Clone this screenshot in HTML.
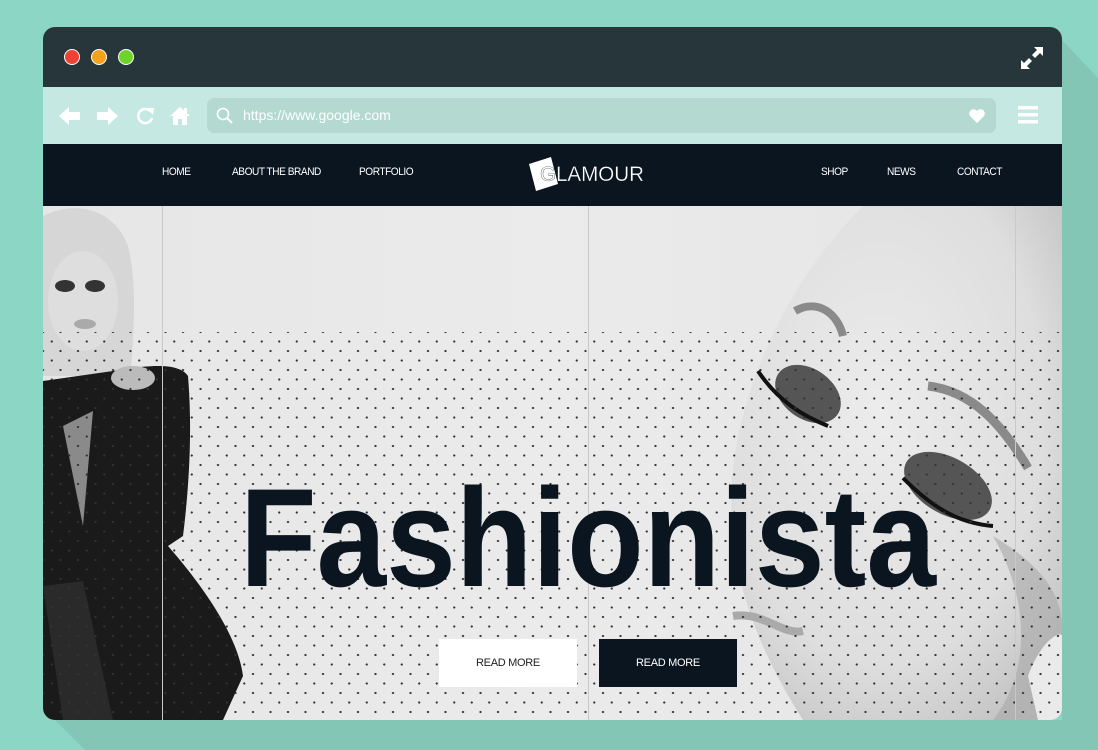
<!DOCTYPE html>
<html><head><meta charset="utf-8"><style>
*{margin:0;padding:0;box-sizing:border-box}
body{width:1098px;height:750px;overflow:hidden;background:#8cd6c5;font-family:"Liberation Sans",sans-serif;position:relative}
.shadow{position:absolute;left:0;top:0;width:1098px;height:750px}
.win{position:absolute;left:43px;top:27px;width:1019px;height:693px;border-radius:12px;overflow:hidden;background:#e8e8e8}
.title{position:absolute;left:0;top:0;width:100%;height:60px;background:#26363b}
.dot{position:absolute;top:22px;width:16px;height:16px;border-radius:50%;border:1.5px solid #fff}
.tool{position:absolute;left:0;top:60px;width:100%;height:57px;background:#c5e9e2}
.url{position:absolute;left:164px;top:11px;width:789px;height:35px;border-radius:7px;background:#b3d9d1;color:#fff;font-size:14px;line-height:35px;padding-left:36px}
.nav{position:absolute;left:0;top:117px;width:100%;height:62px;background:#0a1520;color:#fff;font-size:11px}
.nav span{position:absolute;top:22px;letter-spacing:-0.5px;transform:scaleX(0.92);transform-origin:left}
.hero{position:absolute;left:0;top:179px;width:100%;height:514px;background:linear-gradient(90deg,#e6e6e6,#ebebeb 50%,#e4e4e4)}
.dots{position:absolute;left:0;top:126px;width:100%;height:388px;
background-image:radial-gradient(circle,#333 0.9px,transparent 1.3px),radial-gradient(circle,#333 0.9px,transparent 1.3px);
background-size:17.5px 19px,17.5px 19px;background-position:0 0,8.75px 9.5px}
.vl{position:absolute;top:0;width:1px;height:514px;background:#c9c9c9}
.btn{position:absolute;top:433px;width:138px;height:48px;font-size:11px;text-align:center;line-height:48px;letter-spacing:-0.3px}
</style></head><body>
<svg class="shadow" viewBox="0 0 1098 750"><polygon points="1062,40 1098,78 1098,750 85,750 55,720 1062,720" fill="#83c6b6"/></svg>
<div class="win">
 <div class="title">
  <div class="dot" style="left:21px;background:#ef4134"></div>
  <div class="dot" style="left:48px;background:#f7a11a"></div>
  <div class="dot" style="left:75px;background:#6fd42a"></div>
  <svg style="position:absolute;left:977px;top:19px" width="24" height="24" viewBox="0 0 24 24" fill="#fff"><polygon points="14,1 23,1 23,10 20,7 15,12 12,9 17,4"/><polygon points="1,14 1,23 10,23 7,20 12,15 9,12 4,17"/></svg>
 </div>
 <div class="tool">
  <svg style="position:absolute;left:16px;top:19px" width="22" height="20" viewBox="0 0 22 20" fill="#fff"><polygon points="0,10 10,1 10,6 21,6 21,14 10,14 10,19"/></svg>
  <svg style="position:absolute;left:54px;top:19px" width="22" height="20" viewBox="0 0 22 20" fill="#fff"><polygon points="21,10 11,1 11,6 0,6 0,14 11,14 11,19"/></svg>
  <svg style="position:absolute;left:92px;top:19px" width="20" height="20" viewBox="0 0 20 20"><path d="M16 6A7 7 0 1 0 17 12" fill="none" stroke="#fff" stroke-width="2.5"/><polygon points="12,2 19,2 18,9" fill="#fff"/></svg>
  <svg style="position:absolute;left:126px;top:18px" width="22" height="22" viewBox="0 0 22 22" fill="#fff"><polygon points="11,2 21,11 18,11 18,20 13,20 13,14 9,14 9,20 4,20 4,11 1,11"/><rect x="15" y="3" width="3" height="5"/></svg>
  <div class="url">https://www.google.com
   <svg style="position:absolute;left:9px;top:9px" width="18" height="18" viewBox="0 0 18 18"><circle cx="7" cy="7" r="5.5" fill="none" stroke="#fff" stroke-width="1.6"/><line x1="11" y1="11" x2="16" y2="16" stroke="#fff" stroke-width="2"/></svg>
   <svg style="position:absolute;left:762px;top:11px" width="16" height="14" viewBox="0 0 16 14" fill="#fff"><path d="M8 14L1 7A4 4 0 0 1 8 2A4 4 0 0 1 15 7Z"/></svg>
  </div>
  <svg style="position:absolute;left:975px;top:18px" width="20" height="20" viewBox="0 0 20 20" fill="#fff"><rect x="0" y="1" width="20" height="3.5"/><rect x="0" y="8" width="20" height="3.5"/><rect x="0" y="15" width="20" height="3.5"/></svg>
 </div>
 <div class="nav">
  <span style="left:119px">HOME</span>
  <span style="left:189px">ABOUT THE BRAND</span>
  <span style="left:316px">PORTFOLIO</span>
  <svg style="position:absolute;left:484px;top:0" width="120" height="62" viewBox="0 0 120 62"><polygon points="2,20 24,13 31,40 9,47" fill="#fff"/><text x="13" y="37" font-family="Liberation Sans,sans-serif" font-size="21" fill="#fff" stroke="#0a1520" stroke-width="0.3" textLength="104" lengthAdjust="spacingAndGlyphs">GLAMOUR</text></svg>
  <span style="left:778px">SHOP</span>
  <span style="left:844px">NEWS</span>
  <span style="left:914px">CONTACT</span>
 </div>
 <div class="hero">
  <svg style="position:absolute;left:0;top:0" width="1019" height="514" viewBox="0 0 1019 514">
   <defs><radialGradient id="f" cx="0.45" cy="0.4" r="0.7"><stop offset="0" stop-color="#ececec"/><stop offset="0.7" stop-color="#dedede"/><stop offset="1" stop-color="#c4c4c4"/></radialGradient></defs>
   <path d="M0,10 C30,-5 70,0 85,40 C95,80 90,130 88,165 L60,170 L0,170Z" fill="#d6d6d6"/>
   <ellipse cx="40" cy="95" rx="35" ry="50" fill="#dedede"/>
   <ellipse cx="22" cy="80" rx="10" ry="6" fill="#333"/><ellipse cx="52" cy="80" rx="10" ry="6" fill="#333"/>
   <ellipse cx="42" cy="118" rx="11" ry="5" fill="#aaa"/>
   <path d="M0,175 L70,165 C100,160 135,155 145,170 C150,230 145,290 140,330 L125,340 C160,380 195,430 200,470 L180,514 L0,514Z" fill="#1a1a1a"/>
   <path d="M20,220 L50,205 L40,320 Z" fill="#8a8a8a"/>
   <ellipse cx="90" cy="172" rx="22" ry="12" fill="#bbb"/>
   <path d="M0,380 L40,375 L70,514 L20,514Z" fill="#2a2a2a"/>
   <path d="M820,0 C760,60 715,140 695,230 C675,330 700,420 760,514 L1019,514 L1019,0Z" fill="url(#f)"/>
   <path d="M950,330 C1000,360 1019,390 1019,420 L1019,514 L950,514 C985,470 990,400 950,330Z" fill="#a8a8a8" opacity="0.6"/>
   <path d="M985,470 C1000,430 1019,425 1019,430 L1019,514 L995,514Z" fill="#eaeaea"/>
   <ellipse cx="765" cy="188" rx="36" ry="25" transform="rotate(35 765 188)" fill="#555"/>
   <path d="M715,165 C735,195 760,210 785,220" stroke="#111" stroke-width="4" fill="none"/>
   <path d="M752,105 C775,92 795,108 800,130" stroke="#8a8a8a" stroke-width="8" fill="none"/>
   <ellipse cx="905" cy="280" rx="48" ry="28" transform="rotate(30 905 280)" fill="#555"/>
   <path d="M860,272 C890,302 915,317 950,320" stroke="#111" stroke-width="4" fill="none"/>
   <path d="M885,180 C930,185 960,220 985,262" stroke="#8a8a8a" stroke-width="9" fill="none"/>
   <path d="M690,410 C720,405 740,430 760,425" stroke="#aaa" stroke-width="8" fill="none"/>
  </svg>
  <div class="dots"></div>
  <div class="vl" style="left:119px"></div><div class="vl" style="left:545px"></div><div class="vl" style="left:972px"></div>
  <svg style="position:absolute;left:0;top:0" width="1019" height="514"><text x="197" y="380" font-family="Liberation Sans,sans-serif" font-weight="bold" font-size="140" fill="#0a1520" textLength="696" lengthAdjust="spacingAndGlyphs">Fashionista</text></svg>
  <div class="btn" style="left:396px;background:#fff;color:#222">READ MORE</div>
  <div class="btn" style="left:556px;background:#0a1520;color:#fff">READ MORE</div>
 </div>
</div>
</body></html>
